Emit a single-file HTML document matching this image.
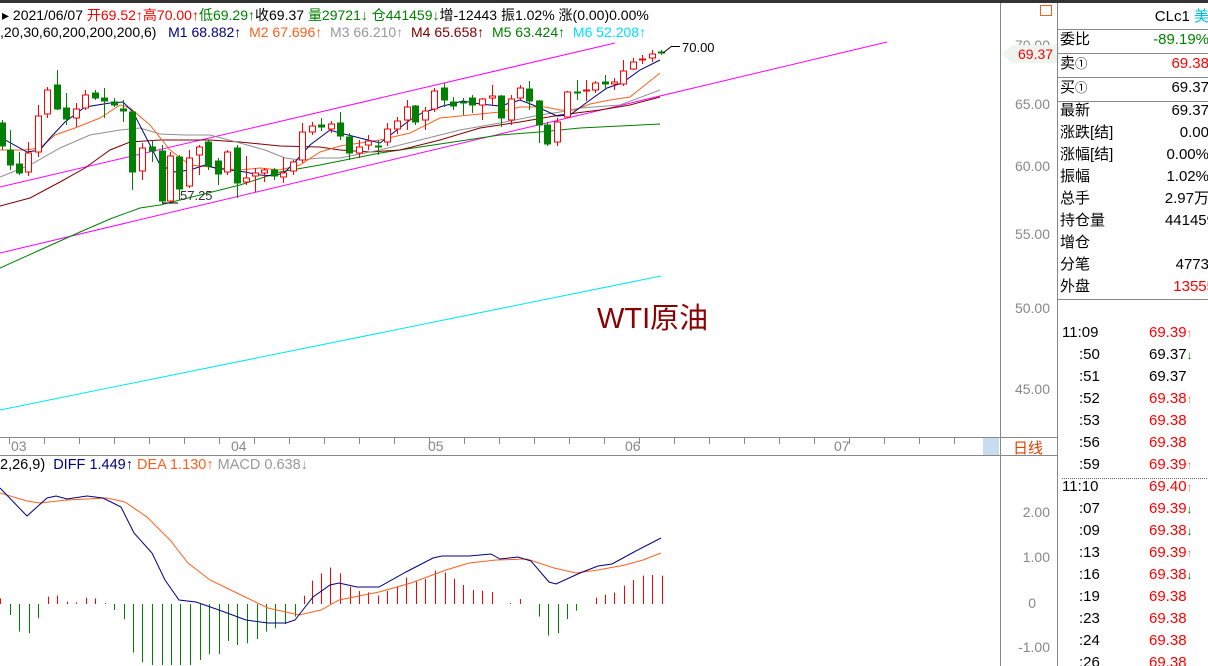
<!DOCTYPE html>
<html><head><meta charset="utf-8">
<style>
body{margin:0;width:1208px;height:666px;overflow:hidden;background:#fff;font-family:"Liberation Sans","Noto Sans CJK SC",sans-serif;position:relative}
.t{position:absolute;white-space:nowrap}
.r{color:#f00}.g{color:#008000}.k{color:#000}
#rp{position:absolute;left:1057px;top:3px;width:151px;height:663px;border-left:1px solid #888;font-size:15px;overflow:hidden}
.row{position:absolute;left:2px;right:0;height:22px;line-height:22px;white-space:nowrap}
.row .v{position:absolute;right:0;top:0}
.hl{position:absolute;left:0;right:0;height:1px;background:#888}
.tk{position:absolute;left:0;right:0;height:22px;line-height:22px}
.tk .a{position:absolute;left:4px}.tk .b{position:absolute;left:21px}.tk .p{position:absolute;left:91px}
.up{color:#f08070;font-size:12px}.dn{color:#008000;font-size:12px}
.ax{position:absolute;right:158px;font-size:14px;color:#888}
</style></head><body>
<div style="position:absolute;left:0;top:0;width:1208px;height:3px;background:#333"></div>
<div class="t" style="left:2px;top:5px;font-size:14px">▸ 2021/06/07 <span class="r">开69.52↑高70.00↑</span><span class="g">低69.29↑</span>收69.37 <span class="g">量29721↓ 仓441459↓</span>增-12443 振1.02% 涨(0.00)0.00%</div>
<div class="t" style="left:0;top:24px;font-size:14px">,20,30,60,200,200,200,6) &nbsp; <span style="color:#000080">M1 68.882↑</span> &nbsp;<span style="color:#ff6020">M2 67.696↑</span> &nbsp;<span style="color:#999">M3 66.210↑</span> &nbsp;<span style="color:#800000">M4 65.658↑</span> &nbsp;<span class="g">M5 63.424↑</span> &nbsp;<span style="color:#00e0ff">M6 52.208↑</span></div>

<svg id="c" width="1000" height="666" style="position:absolute;left:0;top:0"></svg>
<div class="t" style="left:682px;top:40px;font-size:13px">70.00</div>
<div class="t" style="left:180px;top:188px;font-size:13px;color:#333">57.25</div>
<div class="t" style="left:597px;top:295px;font-size:29px;color:#8b0000">WTI原油</div>

<div style="position:absolute;left:1000px;top:3px;width:1px;height:663px;background:#888"></div>
<div style="position:absolute;left:1040px;top:5px;width:12px;height:11px;border:1px solid #f06020;box-sizing:border-box"></div>
<div class="ax" style="top:37px">70.00</div>
<svg width="57" height="18" style="position:absolute;left:1002px;top:45px"><polygon points="0,9 10,0 57,0 57,18 10,18" fill="#eef5ee"/></svg>
<div class="t r" style="left:1018px;top:46px;font-size:14px">69.37</div>
<div class="ax" style="top:96px">65.00</div>
<div class="ax" style="top:158px">60.00</div>
<div class="ax" style="top:226px">55.00</div>
<div class="ax" style="top:300px">50.00</div>
<div class="ax" style="top:381px">45.00</div>
<div class="ax" style="top:504px">2.00</div>
<div class="ax" style="top:549px">1.00</div>
<div class="ax" style="top:595px;right:172px">0</div>
<div class="ax" style="top:639px">-1.00</div>
<div style="position:absolute;left:0;top:437px;width:1057px;height:1px;background:#888"></div>
<div style="position:absolute;left:0;top:455px;width:1057px;height:1px;background:#888"></div>
<div style="position:absolute;left:983px;top:438px;width:16px;height:17px;background:#c8dcf0"></div>
<div class="t" style="left:1013px;top:437px;font-size:15px;color:#e04000">日线</div>
<div class="t" style="left:11px;top:438px;font-size:14px;color:#888">03</div>
<div class="t" style="left:231px;top:438px;font-size:14px;color:#888">04</div>
<div class="t" style="left:428px;top:438px;font-size:14px;color:#888">05</div>
<div class="t" style="left:625px;top:438px;font-size:14px;color:#888">06</div>
<div class="t" style="left:834px;top:438px;font-size:14px;color:#888">07</div>
<div class="t" style="left:0;top:457px;font-size:14.5px">2,26,9) &nbsp;<span style="color:#000080">DIFF 1.449↑</span> <span style="color:#ff6020">DEA 1.130↑</span> <span style="color:#999">MACD 0.638↓</span></div>

<div id="rp">
<div class="row" style="top:2px;height:24px;line-height:24px;font-size:15px"><span class="v">CLc1 <span style="color:#00c0e0">美</span></span></div>
<div class="hl" style="top:26px"></div>
<div class="row" style="top:26px">委比<span class="v g">-89.19%</span></div>
<div class="hl" style="top:50px"></div>
<div class="row" style="top:50px">卖<small>①</small><span class="v r">69.38</span></div>
<div class="hl" style="top:74px"></div>
<div class="row" style="top:74px">买<small>①</small><span class="v">69.37</span></div>
<div class="hl" style="top:98px"></div>
<div class="row" style="top:97px">最新<span class="v">69.37</span></div>
<div class="row" style="top:119px">涨跌[结]<span class="v">0.00</span></div>
<div class="row" style="top:141px">涨幅[结]<span class="v">0.00%</span></div>
<div class="row" style="top:163px">振幅<span class="v">1.02%</span></div>
<div class="row" style="top:185px">总手<span class="v">2.97万</span></div>
<div class="row" style="top:207px">持仓量<span class="v" style="right:-6px">441459</span></div>
<div class="row" style="top:229px">增仓</div>
<div class="row" style="top:251px">分笔<span class="v">4773</span></div>
<div class="row" style="top:273px">外盘<span class="v r" style="right:-6px">13555</span></div>
<div class="hl" style="top:296px"></div>
<div class="tk" style="top:319px"><span class="a">11:09</span><span class="p r">69.39<span class="up">↑</span></span></div>
<div class="tk" style="top:341px"><span class="b">:50</span><span class="p">69.37<span class="dn">↓</span></span></div>
<div class="tk" style="top:363px"><span class="b">:51</span><span class="p">69.37</span></div>
<div class="tk" style="top:385px"><span class="b">:52</span><span class="p r">69.38<span class="up">↑</span></span></div>
<div class="tk" style="top:407px"><span class="b">:53</span><span class="p r">69.38</span></div>
<div class="tk" style="top:429px"><span class="b">:56</span><span class="p r">69.38</span></div>
<div class="tk" style="top:451px"><span class="b">:59</span><span class="p r">69.39<span class="up">↑</span></span></div>
<div style="position:absolute;left:4px;right:0;top:475px;border-top:1px dotted #666"></div>
<div class="tk" style="top:473px"><span class="a">11:10</span><span class="p r">69.40<span class="up">↑</span></span></div>
<div class="tk" style="top:495px"><span class="b">:07</span><span class="p r">69.39<span class="dn">↓</span></span></div>
<div class="tk" style="top:517px"><span class="b">:09</span><span class="p r">69.38<span class="dn">↓</span></span></div>
<div class="tk" style="top:539px"><span class="b">:13</span><span class="p r">69.39<span class="up">↑</span></span></div>
<div class="tk" style="top:561px"><span class="b">:16</span><span class="p r">69.38<span class="dn">↓</span></span></div>
<div class="tk" style="top:583px"><span class="b">:19</span><span class="p r">69.38</span></div>
<div class="tk" style="top:605px"><span class="b">:23</span><span class="p r">69.38</span></div>
<div class="tk" style="top:627px"><span class="b">:24</span><span class="p r">69.38</span></div>
<div class="tk" style="top:649px"><span class="b">:26</span><span class="p r">69.38</span></div>
</div>

<script>
var s=document.getElementById('c'),h='';
function pl(p,c,w){h+='<polyline fill="none" stroke="'+c+'" stroke-width="'+(w||1)+'" points="'+p+'"/>';}
function ln(a,b,c,d,col,w){h+='<line x1="'+a+'" y1="'+b+'" x2="'+c+'" y2="'+d+'" stroke="'+col+'" stroke-width="'+(w||1)+'"/>';}
[47,105,167,235,309,391,513,558,604,648].forEach(function(y){ln(1000,y,1005,y,'#888');});
for(var x=9;x<990;x+=35)ln(x+0.5,438,x+0.5,444,'#888');
ln(0,187,615,43,'#ff00ff');ln(0,253,887,42,'#ff00ff');
ln(0,410,661,276,'#00e8f0');
pl('0,268 40,250 80,232 110,219 140,208 160,205 200,195 240,185 280,172 320,165 340,161 380,153 420,147 460,141 500,135 540,132 580,128 620,126 660,124','#008000');
pl('0,206 30,198 60,182 85,168 110,150 130,142 160,140 210,140 240,142 280,146 320,147 340,150 370,152 400,150 440,140 480,128 520,122 560,115 600,110 630,105 660,97','#800000');
pl('0,177 30,165 60,148 90,135 120,130 140,128 160,134 185,135 210,135 240,143 265,150 285,158 300,160 320,158 340,158 380,150 420,140 460,130 500,123 540,115 560,112 580,108 620,105 660,90','#909090');
pl('0,150 25,150 40,148 55,135 75,128 100,118 120,105 130,108 150,125 170,150 190,165 210,167 240,170 260,168 280,170 300,165 320,152 340,146 380,140 410,133 440,118 470,115 500,112 520,107 545,107 560,110 575,110 590,104 610,100 630,97 645,85 660,73','#ff6020');
pl('0,137 27,152 40,150 50,138 65,122 85,107 110,103 123,102 133,112 150,145 160,165 175,172 190,170 205,165 215,168 230,170 245,172 260,175 275,176 285,172 295,162 310,145 330,130 340,133 380,143 393,133 410,120 422,113 443,106 463,101 480,104 500,106 520,100 533,105 557,116 570,115 590,100 607,88 622,83 640,70 660,60','#000080');
var C=[[2,123,146,120,150,0],[10,150,165,130,170,0],[19,164,173,152,175,0],[28,153,172,142,176,1],[38,116,152,105,157,1],[47,90,114,87,118,1],[57,85,109,70,110,0],[66,108,119,93,125,0],[76,109,118,103,127,1],[85,95,108,90,110,1],[95,93,98,90,100,0],[104,98,101,88,118,0],[114,102,105,98,107,0],[123,109,111,100,122,0],[132,112,172,110,190,0],[142,148,171,143,180,1],[152,147,151,140,162,0],[162,151,201,145,203,0],[170,156,201,152,202,1],[179,157,189,155,200,0],[189,158,186,150,188,1],[199,147,155,145,175,1],[208,142,166,140,170,0],[218,161,174,158,185,0],[227,152,172,150,175,1],[237,148,183,145,198,0],[246,178,182,156,185,1],[255,173,176,168,192,1],[264,170,173,168,182,1],[274,170,176,168,180,0],[283,173,177,157,183,1],[293,162,171,160,175,1],[302,132,160,123,163,1],[312,126,132,122,135,1],[321,125,127,118,131,0],[331,124,129,121,133,1],[340,123,136,112,140,0],[349,137,153,133,160,0],[359,147,153,140,158,1],[368,141,145,135,150,1],[378,146,147,140,155,0],[387,129,142,123,146,1],[397,121,129,117,134,1],[407,107,120,100,130,1],[415,106,122,105,125,0],[425,111,120,107,130,1],[434,91,109,88,112,1],[444,88,100,83,107,0],[453,102,106,97,110,0],[463,102,103,98,115,0],[472,98,105,95,113,0],[482,99,105,98,120,1],[492,96,98,85,105,1],[501,96,118,95,127,0],[511,99,120,95,125,1],[520,88,98,85,101,1],[529,89,101,81,110,0],[539,101,125,100,143,0],[547,125,144,122,146,0],[557,122,142,118,146,1],[567,92,117,91,118,1],[577,92,93,80,100,0],[586,90,91,80,101,1],[595,83,90,81,93,1],[605,82,84,75,90,0],[614,82,84,78,90,1],[623,71,84,60,86,1],[633,62,69,58,70,1],[642,59,60,55,64,1],[652,54,58,50,62,1],[661,52,53,50,55,0]];
C.forEach(function(c){var col=c[5]?'#ff0000':'#008000';ln(c[0]+0.5,c[3],c[0]+0.5,c[4],col);
h+='<rect x="'+(c[0]-2.5)+'" y="'+c[1]+'" width="6" height="'+Math.max(1,c[2]-c[1])+'" fill="'+(c[5]?'#fff':col)+'" stroke="'+col+'"/>';});
ln(663,53,672,46,'#000');ln(672,46.5,680,46.5,'#000');ln(162,203,178,203,'#000');
var H=[[0,505],[22,555],[43,605],[64,610],[86,565],[107,500],[128,497],[150,515],[171,517],[192,503],[213,505],[235,519],[256,540],[277,568],[298,668],[319,697],[340,705],[362,705],[383,705],[404,705],[426,705],[447,690],[468,673],[490,672],[511,633],[532,645],[554,640],[575,627],[596,605],[617,595],[638,582],[660,560],[680,497],[700,452],[720,430],[740,413],[762,430],[783,470],[804,483],[825,487],[846,497],[868,483],[889,470],[910,443],[932,455],[953,447],[974,422],[996,428],[1017,446],[1038,465],[1060,480],[1080,482],[1101,486],[1143,519],[1164,507],[1207,560],[1228,617],[1249,610],[1270,567],[1291,542],[1334,503],[1355,494],[1376,488],[1397,467],[1418,450],[1440,437],[1461,435],[1482,437]];
H.forEach(function(b){var x=Math.round(b[0]/2.24)+0.5,y=b[1]/3+430;ln(x,604,x,y,y<604?'#ff0000':'#008000');});
pl('0,493 27,501 40,503 67,500 107,498 125,502 147,517 170,540 188,563 210,580 241,595 268,608 299,615 321,610 339,600 379,592 411,583 446,570 469,563 496,560 527,559 554,568 576,573 598,570 625,565 643,560 661,553','#ff6020');
pl('0,488 27,516 47,498 56,496 67,499 87,496 103,498 121,507 134,533 152,553 165,580 179,600 196,602 219,610 246,620 268,623 286,623 295,620 313,597 330,585 339,583 357,587 379,587 406,572 433,558 442,556 469,556 491,554 500,559 518,557 531,561 549,582 556,584 580,573 598,566 612,564 634,552 661,538','#000080');
s.innerHTML=h;
</script>
</body></html>
